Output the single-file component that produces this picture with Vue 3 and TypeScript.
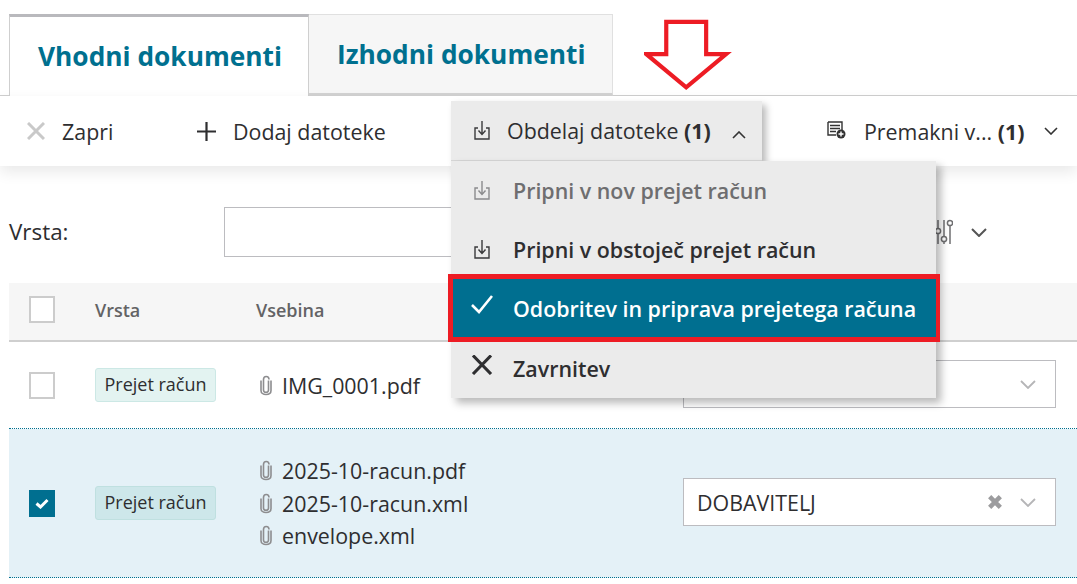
<script setup lang="ts">
interface Row {
  checked: boolean
  files: string[]
  value: string
}

const rows: Row[] = [
  { checked: false, files: ['IMG_0001.pdf'], value: '' },
  { checked: true, files: ['2025-10-racun.pdf', '2025-10-racun.xml', 'envelope.xml'], value: 'DOBAVITELJ' },
]
</script>

<template>
  <div class="page">
    <div class="tabs">
      <div class="tab active">Vhodni dokumenti</div>
      <div class="tab">Izhodni dokumenti</div>
    </div>

    <div class="toolbar">
      <div class="tool close-tool">
        <svg class="ic-close" viewBox="0 0 18 18"><path d="M1 1 17 17M17 1 1 17" /></svg>
        <span>Zapri</span>
      </div>
      <div class="tool add-tool">
        <svg class="ic-plus" viewBox="0 0 19 19"><path d="M9.5 0V19M0 9.5H19" /></svg>
        <span>Dodaj datoteke</span>
      </div>
      <div class="dropdown">
        <svg class="ic-down" viewBox="0 0 16 20"><path d="M4 8H1V19H15V8H12M8 1V14M4.5 10.5 8 14.5 11.5 10.5" /></svg>
        <span class="dd-label">Obdelaj datoteke <b>(1)</b></span>
        <svg class="ic-chev up" viewBox="0 0 14 8"><path d="M1 7 7 1 13 7" /></svg>

        <div class="menu">
          <div class="item disabled">
            <svg class="ic-down" viewBox="0 0 16 20"><path d="M4 8H1V19H15V8H12M8 1V14M4.5 10.5 8 14.5 11.5 10.5" /></svg>
            <span>Pripni v nov prejet račun</span>
          </div>
          <div class="item">
            <svg class="ic-down" viewBox="0 0 16 20"><path d="M4 8H1V19H15V8H12M8 1V14M4.5 10.5 8 14.5 11.5 10.5" /></svg>
            <span>Pripni v obstoječ prejet račun</span>
          </div>
          <div class="item selected">
            <svg class="ic-big" viewBox="0 0 22 20"><path d="M1 11 8 18 21 2" /></svg>
            <span>Odobritev in priprava prejetega računa</span>
          </div>
          <div class="item last">
            <svg class="ic-big" viewBox="0 0 22 20"><path d="M2 0.5 20 19M20 0.5 2 19" /></svg>
            <span>Zavrnitev</span>
          </div>
        </div>
      </div>
      <div class="tool move-tool">
        <svg class="ic-move" viewBox="0 0 19 18">
          <path class="thin" d="M1 1H15V9M9 14H1V1" />
          <path class="thick" d="M3 4.5H13M3 7.5H13M3 10.5H9" />
          <circle cx="14" cy="13" r="4.5" />
          <path class="plus" d="M14 10.5V15.5M11.5 13H16.5" />
        </svg>
        <span>Premakni v... <b>(1)</b></span>
        <svg class="ic-chev move-chev" viewBox="0 0 14 8"><path d="M1 1 7 7 13 1" /></svg>
      </div>
    </div>

    <div class="filter">
      <label class="filter-label">Vrsta:</label>
      <div class="filter-input"></div>
      <svg class="ic-sliders" viewBox="0 0 18 26">
        <path d="M3 1V9M3 15V25M9 1V17M9 23V25M15 7V25" />
        <circle cx="3" cy="12" r="2.6" />
        <circle cx="9" cy="20" r="2.6" />
        <circle cx="15" cy="4" r="2.6" />
      </svg>
      <svg class="ic-filter-chev" viewBox="0 0 16 9"><path d="M1 1 8 8 15 1" /></svg>
    </div>

    <div class="table">
      <div class="thead">
        <span class="checkbox"></span>
        <span>Vrsta</span>
        <span>Vsebina</span>
      </div>
      <div v-for="(row, i) in rows" :key="i" class="trow" :class="{ checked: row.checked }">
        <span class="checkbox" :class="{ on: row.checked }">
          <svg v-if="row.checked" viewBox="0 0 14 11"><path d="M1.5 5.5 5.5 9 12.5 2" /></svg>
        </span>
        <div><span class="badge">Prejet račun</span></div>
        <div class="files">
          <div v-for="file in row.files" :key="file" class="file">
            <svg class="clip" viewBox="0 0 12 20">
              <path d="M8.5 5V14.5C8.5 16 7.4 16.8 6 16.8S3.5 16 3.5 14.5V4C3.5 2.3 4.6 1 6.2 1S9 2.3 9 4" />
              <path d="M11 5V15C11 17.5 8.8 19 6 19S1 17.5 1 15V5" />
            </svg>
            <span>{{ file }}</span>
          </div>
        </div>
        <div class="select">
          <span class="select-value">{{ row.value }}</span>
          <svg v-if="row.value" class="ic-clear" viewBox="0 0 12 12"><path d="M2 2 10 10M10 2 2 10" /></svg>
          <svg class="ic-select-chev" viewBox="0 0 16 9"><path d="M1 1 8 8 15 1" /></svg>
        </div>
      </div>
    </div>

    <svg class="annotation" viewBox="0 0 96 80">
      <path d="M23 3H65V37H86L44 72 2 37H23Z" />
    </svg>
  </div>
</template>

<style>
html,
body {
  margin: 0;
  background: #fff;
}
</style>

<style scoped>
.page {
  position: relative;
  width: 1077px;
  height: 584px;
  overflow: hidden;
  background: #fff;
  font-family: "Open Sans", "Noto Sans", sans-serif;
  color: #2e2e30;
}
svg {
  display: block;
  flex: none;
  fill: none;
}

.tabs {
  display: flex;
  height: 96px;
  box-sizing: border-box;
  padding: 14px 0 0 9px;
  border-bottom: 1px solid #cfcfcf;
}
.tab {
  box-sizing: border-box;
  width: 304px;
  height: 82px;
  padding: 0 0 0 28px;
  display: flex;
  align-items: center;
  background: #f6f6f6;
  border: 1px solid #e0e0e0;
  border-left: 0;
  border-bottom: 3px solid #d2d2d2;
  font-size: 26.3px;
  font-weight: 700;
  color: #00708f;
  white-space: nowrap;
}
.tab.active {
  width: 300px;
  background: #fff;
  border: 1px solid #cfcfcf;
  border-top: 3px solid #b9b9bd;
  border-bottom: 0;
  padding-bottom: 2px;
}

.toolbar {
  display: flex;
  align-items: flex-start;
  height: 70px;
  box-sizing: border-box;
  padding-left: 27px;
  background: #fff;
  box-shadow: 0 6px 14px rgba(0, 0, 0, 0.09);
  position: relative;
  font-size: 21.4px;
}
.tool {
  display: flex;
  align-items: center;
  height: 70px;
  white-space: nowrap;
}
.close-tool {
  width: 170px;
}
.add-tool {
  width: 254px;
}
.ic-close {
  width: 18px;
  height: 18px;
  margin-right: 17px;
  stroke: #c9c9c9;
  stroke-width: 3;
}
.ic-plus {
  width: 19px;
  height: 19px;
  margin-right: 17px;
  stroke: #2e2e30;
  stroke-width: 2.2;
}

.dropdown {
  position: relative;
  display: flex;
  align-items: center;
  box-sizing: border-box;
  width: 311px;
  height: 60px;
  margin-top: 5px;
  padding-left: 23px;
  background: #ebebeb;
  border-bottom: 1px solid #d6d6d6;
  box-shadow: 4px 4px 7px rgba(0, 0, 0, 0.28);
  white-space: nowrap;
}
.ic-down {
  width: 16px;
  height: 20px;
  margin-top: -2px;
  stroke: #3a3a3c;
  stroke-width: 1.4;
}
.dd-label {
  margin-left: 17px;
}
.ic-chev {
  width: 14px;
  height: 8px;
  stroke: #333;
  stroke-width: 1.6;
}
.ic-chev.up {
  margin: 8px 0 0 21px;
}

.menu {
  position: absolute;
  z-index: 5;
  top: 60px;
  left: 0;
  width: 485px;
  background: #ebebeb;
  box-shadow: 5px 5px 8px rgba(0, 0, 0, 0.28);
  font-weight: 600;
}
.item {
  position: relative;
  display: flex;
  align-items: center;
  height: 59px;
  padding-left: 23px;
}
.item > span {
  position: absolute;
  left: 62px;
  white-space: nowrap;
}
.item.disabled {
  color: #6e6e70;
}
.item.disabled .ic-down {
  stroke: #8b8b8d;
}
.item.selected {
  height: 58px;
  background: #006f90;
  color: #fff;
}
.item.selected::after {
  content: "";
  position: absolute;
  top: -5px;
  left: -3px;
  right: -4px;
  bottom: -5px;
  border: solid #ed1c24;
  border-width: 5px 4px 5px 5px;
}
.item.last {
  height: 61px;
  font-weight: 600;
  color: #2e2e30;
}
.item.last > span {
  margin-top: 1px;
}
.ic-big {
  width: 22px;
  height: 20px;
  margin: -6px 0 0 -3px;
  stroke: currentColor;
  stroke-width: 2.6;
}
.item.last .ic-big {
  stroke-width: 3.1;
}
.item.selected .ic-big {
  margin-top: -8px;
}

.move-tool {
  margin-left: 65px;
}
.ic-move {
  width: 19px;
  height: 18px;
  margin-right: 18px;
  margin-top: -2px;
}
.ic-move .thin {
  stroke: #333;
  stroke-width: 1.4;
}
.ic-move .thick {
  stroke: #333;
  stroke-width: 1.6;
}
.ic-move circle {
  fill: #333;
}
.ic-move .plus {
  stroke: #fff;
  stroke-width: 1.4;
}
.move-chev {
  margin-left: 20px;
}

.filter {
  display: flex;
  align-items: center;
  height: 50px;
  margin: 41px 0 26px;
  padding-left: 9px;
  font-size: 22.4px;
}
.filter-label {
  width: 215px;
  margin-top: -2px;
}
.filter-input {
  box-sizing: border-box;
  width: 700px;
  height: 50px;
  background: #fff;
  border: 1px solid #bcbcc0;
}
.ic-sliders {
  width: 18px;
  height: 26px;
  margin-left: 11px;
  stroke: #6f6f71;
  stroke-width: 1.5;
}
.ic-filter-chev {
  width: 16px;
  height: 9px;
  margin-left: 18px;
  stroke: #555;
  stroke-width: 2;
}

.table {
  margin-left: 9px;
}
.thead,
.trow {
  display: grid;
  grid-template-columns: 66px 161px 427px 373px;
  align-items: center;
  padding-left: 20px;
}
.thead {
  height: 59px;
  box-sizing: border-box;
  padding-bottom: 4px;
  background: #f6f6f6;
  border-bottom: 2px solid #cfcfcf;
  font-size: 18px;
  font-weight: 600;
  color: #636365;
}
.checkbox {
  display: flex;
  align-items: center;
  justify-content: center;
  box-sizing: border-box;
  width: 26px;
  height: 27px;
  background: #fff;
  border: 2px solid #cccccc;
}
.checkbox.on {
  background: #006f90;
  border-color: #006f90;
}
.checkbox svg {
  width: 14px;
  height: 11px;
  stroke: #fff;
  stroke-width: 3;
}
.trow {
  height: 87px;
  box-sizing: border-box;
  border-bottom: 1px dotted #00708f;
}
.trow.checked {
  height: 149px;
  background: #e4f1f7;
}
.badge {
  display: inline-block;
  box-sizing: border-box;
  width: 121px;
  height: 34px;
  line-height: 31px;
  text-align: center;
  font-size: 18px;
  background: #e3f3f1;
  border: 1px solid #cce8e5;
  border-radius: 3px;
  vertical-align: middle;
}
.trow.checked .badge {
  background: #cde7ea;
  border-color: #bfe0e0;
}
.files {
  display: flex;
  flex-direction: column;
  font-size: 21.4px;
}
.file {
  display: flex;
  align-items: center;
  height: 32.5px;
  padding-left: 4px;
}
.clip {
  width: 12px;
  height: 21px;
  margin-right: 10px;
  stroke: #8d8d8f;
  stroke-width: 1.6;
}
.select {
  display: flex;
  align-items: center;
  box-sizing: border-box;
  height: 48px;
  margin-top: -2px;
  padding: 0 19px 0 13px;
  background: #fff;
  border: 1px solid #bcbcc0;
  font-size: 21.4px;
}
.select-value {
  flex: 1;
}
.ic-clear {
  width: 16px;
  height: 16px;
  margin-right: 17px;
  stroke: #9c9c9e;
  stroke-width: 3.4;
}
.ic-select-chev {
  width: 16px;
  height: 9px;
  stroke: #b5b5b7;
  stroke-width: 1.8;
}

.annotation {
  position: absolute;
  left: 644px;
  top: 19px;
  width: 92px;
  height: 76px;
  z-index: 6;
}
.annotation path {
  fill: #fff;
  stroke: #ed1c24;
  stroke-width: 4.4;
  stroke-linejoin: miter;
}
</style>
